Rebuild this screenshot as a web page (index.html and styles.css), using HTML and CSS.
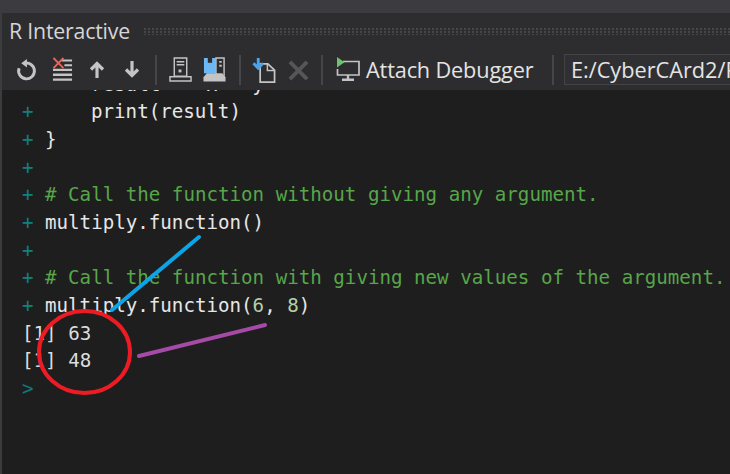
FILE: index.html
```html
<!DOCTYPE html>
<html lang="en">
<head>
<meta charset="utf-8">
<title>R Interactive</title>
<link rel="stylesheet" href="styles.css">
</head>
<body>
<div class="window">
  <div class="top-strip"></div>
  <div class="panel">
    <div class="title-bar">
      <span class="title">R Interactive</span>
      <span class="grip"></span>
    </div>
    <div class="toolbar">
      <svg class="icon i-reset" viewBox="0 0 24 26"><path d="M9.500 5.500A9 9 0 1 1 3.600 11" fill="none" stroke="#c4c4c4" stroke-width="3.400"/><path d="M12.500 0.500V10L6 5.300Z" fill="#c4c4c4"/></svg>
      <svg class="icon i-clear" viewBox="0 0 22 26"><path d="M10 3.500H21M13 8.500H21" stroke="#c4c4c4" stroke-width="2.200"/><path d="M1 13.500H21M1 18.500H21M1 23.500H21" stroke="#c4c4c4" stroke-width="2.400"/><path d="M1.500 1L12 11.500M12 1L1.500 11.500" stroke="#e8655a" stroke-width="2"/></svg>
      <svg class="icon i-up" viewBox="0 0 16 18"><path d="M8 17V3M2 8.500L8 2.500L14 8.500" fill="none" stroke="#c4c4c4" stroke-width="3.200"/></svg>
      <svg class="icon i-down" viewBox="0 0 16 18"><path d="M8 1V15M2 9.500L8 15.500L14 9.500" fill="none" stroke="#c4c4c4" stroke-width="3.200"/></svg>
      <span class="sep s1"></span>
      <svg class="icon i-server" viewBox="0 0 24 26"><path d="M5.500 1H18.500V20H5.500Z" fill="#2d2d30" stroke="#c4c4c4" stroke-width="1.500"/><path d="M8 5H16M8 8H16" stroke="#c4c4c4" stroke-width="1.500"/><path d="M1 25V20.500H23V25Z" fill="none" stroke="#c4c4c4" stroke-width="1.500"/><rect x="10" y="13" width="3" height="3" fill="#c4c4c4"/></svg>
      <svg class="icon i-save" viewBox="0 0 24 26"><path d="M1 1H13V17H1Z" fill="#6cb8f6"/><rect x="5" y="1" width="4.500" height="5" fill="#2d2d30"/><path d="M13.500 1H22V20H13.500Z" fill="#2d2d30" stroke="#c4c4c4" stroke-width="1.500"/><path d="M17 5H19.500M17 9H19.500" stroke="#c4c4c4" stroke-width="2"/><path d="M4 17H20L23.500 21V25.500H0.500V21Z" fill="#c4c4c4"/></svg>
      <span class="sep s2"></span>
      <svg class="icon i-load" viewBox="0 0 25 26"><path d="M8.500 6H16.500L23.500 12.500V25H8.500Z" fill="none" stroke="#c4c4c4" stroke-width="1.800"/><path d="M16 6V13H23" fill="none" stroke="#c4c4c4" stroke-width="1.500"/><path d="M6.500 0V9M1.500 5.500L6.500 10.500L11.500 5.500" fill="none" stroke="#4da3ea" stroke-width="3"/></svg>
      <svg class="icon i-x" viewBox="0 0 22 22"><path d="M2 2L20 20M20 2L2 20" stroke="#565658" stroke-width="4"/></svg>
      <span class="sep s3"></span>
      <svg class="icon i-debug" viewBox="0 0 24 26"><path d="M7 4.500H23V18H1.500V12" fill="none" stroke="#c4c4c4" stroke-width="1.700"/><path d="M1 0V10.500L8.500 5.200Z" fill="#6ec26e"/><path d="M12 18V22M6 22.700H18" stroke="#c4c4c4" stroke-width="2.400"/></svg>
      <span class="attach">Attach Debugger</span>
      <span class="sep s4"></span>
      <div class="path-box">E:/CyberCArd2/R</div>
    </div>
    <div class="console">
      <div class="line clipped"><span class="prompt">+</span><span class="indent"></span>result &lt;- x * y</div>
      <div class="line"><span class="prompt">+</span><span class="indent"></span>print(result)</div>
      <div class="line"><span class="prompt">+</span>}</div>
      <div class="line"><span class="prompt">+</span></div>
      <div class="line"><span class="prompt">+</span><span class="comment"># Call the function without giving any argument.</span></div>
      <div class="line"><span class="prompt">+</span>multiply.function()</div>
      <div class="line"><span class="prompt">+</span></div>
      <div class="line"><span class="prompt">+</span><span class="comment"># Call the function with giving new values of the argument.</span></div>
      <div class="line"><span class="prompt">+</span>multiply.function(<span class="num">6</span>, <span class="num">8</span>)</div>
      <div class="line out">[1] 63</div>
      <div class="line out">[1] 48</div>
      <div class="line"><span class="caret">&gt;</span></div>
    </div>
  </div>
  <svg class="marks" viewBox="0 0 730 474">
    <path class="blue" d="M199 237L112 310"/>
    <path class="purple" d="M139 356L265 325"/>
    <ellipse class="red" cx="84.500" cy="352" rx="45.500" ry="41"/>
  </svg>
</div>
</body>
</html>
```
FILE: styles.css
```css
html, body {
  margin: 0;
  padding: 0;
  background: #1e1e1e;
}
.window {
  position: relative;
  width: 730px;
  height: 474px;
  overflow: hidden;
  display: flex;
  flex-direction: column;
}
.top-strip {
  height: 13px;
  flex: none;
  background: #3b3b40;
}
.panel {
  flex: 1;
  min-height: 0;
  display: flex;
  flex-direction: column;
  border-left: 2px solid #3b3b40;
}
.title-bar {
  height: 35px;
  flex: none;
  background: #2d2d30;
  display: flex;
  align-items: center;
  padding-left: 7px;
  gap: 14px;
  box-sizing: border-box;
}
.title {
  font: 21.300px/1 "Open Sans", sans-serif;
  color: #d6d6d6;
  letter-spacing: -0.2px;
  white-space: nowrap;
}
.grip {
  flex: 1;
  height: 7px;
  margin-top: 2px;
  background-image: radial-gradient(circle at 1px 1px, #46464a 1px, transparent 1px);
  background-size: 4px 3px;
}
.toolbar {
  height: 42px;
  flex: none;
  background: #2d2d30;
  display: flex;
  align-items: center;
  box-sizing: border-box;
  padding-left: 14px;
  padding-top: 2px;
  white-space: nowrap;
}
.icon { flex: none; display: block; }
.i-reset { width: 21px; height: 24px; margin-right: 15px; }
.i-clear { width: 21px; height: 25px; margin-right: 16px; margin-top: -2px; }
.i-up { width: 16px; height: 18px; margin-right: 19px; }
.i-down { width: 16px; height: 18px; margin-right: 15px; margin-top: -2px; }
.sep {
  flex: none;
  width: 2px;
  height: 30px;
  background: #46464a;
  margin-top: -1px;
}
.s1 { margin-right: 12px; }
.i-server { width: 23px; height: 25px; margin-right: 11px; margin-top: -1px; }
.i-save { width: 23px; height: 25px; margin-right: 13px; margin-top: -1px; }
.s2 { margin-right: 11px; }
.i-load { width: 24px; height: 25px; margin-right: 12px; }
.i-x { width: 21px; height: 21px; margin-right: 12px; }
.s3 { margin-right: 13px; }
.i-debug { width: 24px; height: 26px; margin-right: 6px; margin-top: -1px; }
.attach {
  font: 21.700px/1 "Open Sans", sans-serif;
  color: #e4e4e4;
  letter-spacing: -0.15px;
  width: 186px;
  flex: none;
}
.s4 { margin-right: 10px; }
.path-box {
  flex: none;
  width: 300px;
  height: 31px;
  box-sizing: border-box;
  border: 1px solid #434346;
  background: #303033;
  font: 21.700px/29px "Open Sans", sans-serif;
  color: #e4e4e4;
  padding-left: 6px;
  margin-top: -2px;
}
.console {
  flex: 1;
  min-height: 0;
  background: #1e1e1e;
  overflow: hidden;
  font-family: "DejaVu Sans Mono", monospace;
  font-size: 19.170px;
  line-height: 27.700px;
  color: #e6e6e6;
  padding-left: 20px;
}
.line {
  height: 27.700px;
  white-space: pre;
}
.clipped { margin-top: -19.500px; }
.prompt {
  display: inline-block;
  width: 23px;
  color: #0f8080;
}
.indent {
  display: inline-block;
  width: 46px;
}
.comment { color: #57a64a; }
.num { color: #b5cea8; }
.out { color: #dcdcdc; }
.caret { color: #0f7a7a; }
.marks {
  position: absolute;
  left: 0;
  top: 0;
  width: 730px;
  height: 474px;
  fill: none;
  pointer-events: none;
}
.blue { stroke: #0ba4e6; stroke-width: 4; stroke-linecap: round; }
.purple { stroke: #a64aa8; stroke-width: 4; stroke-linecap: round; }
.red { stroke: #ed1c24; stroke-width: 4; }
```
